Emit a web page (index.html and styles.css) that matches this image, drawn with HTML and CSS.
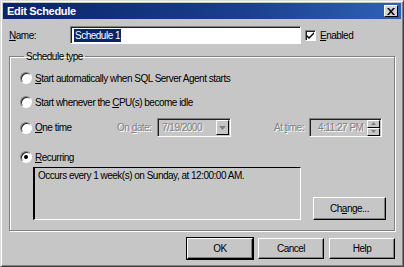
FILE: index.html
```html
<!DOCTYPE html>
<html lang="en">
  <head>
    <meta charset="utf-8" />
    <title>Edit Schedule</title>
    <link rel="stylesheet" href="styles.css">
  </head>
  <body>
    <div class="window">
      <div class="titlebar">
        <span class="title">Edit Schedule</span>
        <span class="close">
          <svg width="8" height="7" viewBox="0 0 8 7"><path d="M0 0h2l2 2.5L6 0h2L5 3.5 8 7H6L4 4.5 2 7H0l3-3.5z" fill="#000"/></svg>
        </span>
      </div>

      <div class="content">
        <div class="name-row">
          <label class="name-label"><u>N</u>ame:</label>
          <div class="field name-field"><span class="selected">Schedule 1</span></div>
          <span class="checkbox">
            <svg width="9" height="9" viewBox="0 0 9 9"><path d="M1 4l2 2 5-5v2L3 8 1 6z" fill="#000"/></svg>
          </span>
          <span class="check-label"><u>E</u>nabled</span>
        </div>

        <fieldset class="group">
          <legend>Schedule type</legend>

          <div class="option">
            <span class="radio"></span>
            <span><u>S</u>tart automatically when SQL Server Agent starts</span>
          </div>
          <div class="option">
            <span class="radio"></span>
            <span>Start whenever the <u>C</u>PU(s) become idle</span>
          </div>
          <div class="option onetime">
            <span class="radio"></span>
            <span class="onetime-label"><u>O</u>ne time</span>
            <span class="disabled date-label">On <u>d</u>ate:</span>
            <div class="field combo">
              <span class="disabled">7/19/2000</span>
              <span class="drop">
                <svg width="7" height="4" viewBox="0 0 7 4"><path d="M0 0h7L3.5 4z" fill="#808080"/></svg>
              </span>
            </div>
            <span class="disabled time-label">At <u>t</u>ime:</span>
            <div class="field timebox">
              <span class="disabled">4:11:27 PM</span>
              <span class="spin">
                <span class="spin-btn"><svg width="5" height="3" viewBox="0 0 5 3"><path d="M2.5 0L5 3H0z" fill="#808080"/></svg></span>
                <span class="spin-btn"><svg width="5" height="3" viewBox="0 0 5 3"><path d="M0 0h5L2.5 3z" fill="#808080"/></svg></span>
              </span>
            </div>
          </div>
          <div class="option recurring">
            <span class="radio checked"></span>
            <span><u>R</u>ecurring</span>
          </div>

          <div class="summary-row">
            <div class="summary">Occurs every 1 week(s) on Sunday, at 12:00:00 AM.</div>
            <button class="btn change">Ch<u>a</u>nge...</button>
          </div>
        </fieldset>

        <div class="buttons">
          <button class="btn default">OK</button>
          <button class="btn">Cancel</button>
          <button class="btn">Help</button>
        </div>
      </div>
    </div>
  </body>
</html>
```

FILE: styles.css
```css
body {
  margin: 0;
  background-color: #c6c6c6;
  font-family: "Liberation Sans", Arial, sans-serif;
  font-size: 10px;
  letter-spacing: -0.5px;
  color: #000;
  white-space: nowrap;
}

.window {
  width: 404px;
  height: 267px;
  box-sizing: border-box;
  padding: 3px;
  border-top: 1px solid #dcdcdc;
  border-left: 1px solid #dcdcdc;
  border-right: 1px solid #404040;
  border-bottom: 1px solid #404040;
  box-shadow: inset 1px 1px #ffffff, inset -1px -1px #808080;
  background-color: #c6c6c6;
}

.titlebar {
  height: 16px;
  margin: -1px -1px 0 -1px;
  display: flex;
  align-items: center;
  justify-content: space-between;
  padding: 0 3px 0 4px;
  background: linear-gradient(to right, #0a246a, #1a3f8c 60%, #2d62b6);
}

.title {
  color: #fff;
  font-weight: bold;
  font-size: 11px;
  letter-spacing: -0.3px;
}

.close {
  width: 14px;
  height: 12px;
  box-sizing: border-box;
  display: flex;
  align-items: center;
  justify-content: center;
  background-color: #d4d4d4;
  border-top: 1px solid #fff;
  border-left: 1px solid #fff;
  border-right: 1px solid #000;
  border-bottom: 1px solid #000;
}

.content {
  padding: 0 5px;
}

.name-row {
  display: flex;
  align-items: center;
  margin-top: 7px;
  height: 18px;
}

.name-label {
  width: 61px;
  flex-shrink: 0;
}

.field {
  box-sizing: border-box;
  flex-shrink: 0;
  border-top: 1px solid #808080;
  border-left: 1px solid #808080;
  border-right: 1px solid #ffffff;
  border-bottom: 1px solid #ffffff;
  box-shadow: inset 1px 1px #202020;
  display: flex;
  align-items: center;
}

.name-field {
  width: 231px;
  height: 18px;
  background-color: #fff;
  padding-left: 3px;
}

.selected {
  background-color: #0a246a;
  color: #fff;
  padding: 0 1px;
  line-height: 13px;
}

.checkbox {
  width: 11px;
  height: 11px;
  flex-shrink: 0;
  margin-left: 4px;
  box-sizing: border-box;
  background-color: #fff;
  border-top: 1px solid #808080;
  border-left: 1px solid #808080;
  border-right: 1px solid #fff;
  border-bottom: 1px solid #fff;
  box-shadow: inset 1px 1px #202020;
  display: flex;
  align-items: center;
  justify-content: center;
}

.check-label {
  margin-left: 4px;
}

.group {
  margin: 7px 0 0 0;
  padding: 0 8px 9px 10px;
  border: 1px solid #808080;
  box-shadow: inset 1px 1px #ffffff, 1px 1px #ffffff;
  height: 180px;
  box-sizing: border-box;
}

.group legend {
  padding: 0 2px;
  margin-left: 4px;
}

.option {
  display: flex;
  align-items: center;
  height: 14px;
}

.option:first-of-type {
  margin-top: 9px;
}

.option + .option {
  margin-top: 10px;
}

.onetime {
  height: 19px;
  margin-top: 9px !important;
}

.recurring {
  margin-top: 13px !important;
}

.radio {
  width: 12px;
  height: 12px;
  flex-shrink: 0;
  box-sizing: border-box;
  border-radius: 50%;
  background-color: #fff;
  border: 1px solid;
  border-color: #808080 #ffffff #ffffff #808080;
  box-shadow: inset 1px 1px #202020;
  margin-right: 3px;
  display: flex;
  align-items: center;
  justify-content: center;
}

.radio.checked::after {
  content: "";
  width: 4px;
  height: 4px;
  border-radius: 50%;
  background-color: #000;
}

.onetime-label {
  width: 82px;
  flex-shrink: 0;
}

.disabled {
  color: #808080;
  text-shadow: 1px 1px #ffffff;
}

.date-label {
  width: 40px;
  flex-shrink: 0;
}

.combo {
  width: 74px;
  height: 19px;
  padding-left: 4px;
  justify-content: space-between;
}

.drop {
  width: 13px;
  height: 15px;
  margin-right: 1px;
  box-sizing: border-box;
  border-top: 1px solid #fff;
  border-left: 1px solid #fff;
  border-right: 1px solid #000;
  border-bottom: 1px solid #000;
  display: flex;
  align-items: center;
  justify-content: center;
}

.time-label {
  margin-left: 43px;
  width: 35px;
  flex-shrink: 0;
}

.timebox {
  width: 73px;
  height: 19px;
  padding-left: 8px;
  justify-content: space-between;
}

.spin {
  display: flex;
  flex-direction: column;
  margin-right: 1px;
}

.spin-btn {
  width: 13px;
  height: 8px;
  box-sizing: border-box;
  border-top: 1px solid #fff;
  border-left: 1px solid #fff;
  border-right: 1px solid #000;
  border-bottom: 1px solid #000;
  display: flex;
  align-items: center;
  justify-content: center;
}

.summary-row {
  display: flex;
  align-items: flex-end;
  justify-content: space-between;
  margin-top: 3px;
  padding-left: 13px;
}

.summary {
  width: 268px;
  height: 53px;
  box-sizing: border-box;
  padding: 2px 3px;
  border-top: 1px solid #000;
  border-left: 2px solid #000;
  border-right: 1px solid #ffffff;
  border-bottom: 1px solid #ffffff;
}

.btn {
  font-family: "Liberation Sans", Arial, sans-serif;
  font-size: 10px;
  letter-spacing: -0.5px;
  color: #000;
  background-color: #c6c6c6;
  width: 66px;
  height: 21px;
  padding: 0;
  border-top: 1px solid #fff;
  border-left: 1px solid #fff;
  border-right: 1px solid #000;
  border-bottom: 1px solid #000;
  box-shadow: inset -1px -1px #808080;
}

.change {
  width: 73px;
  height: 23px;
}

.buttons {
  display: flex;
  justify-content: flex-end;
  gap: 5px;
  margin-top: 7px;
}

.btn.default {
  outline: 1px solid #000;
}
```
